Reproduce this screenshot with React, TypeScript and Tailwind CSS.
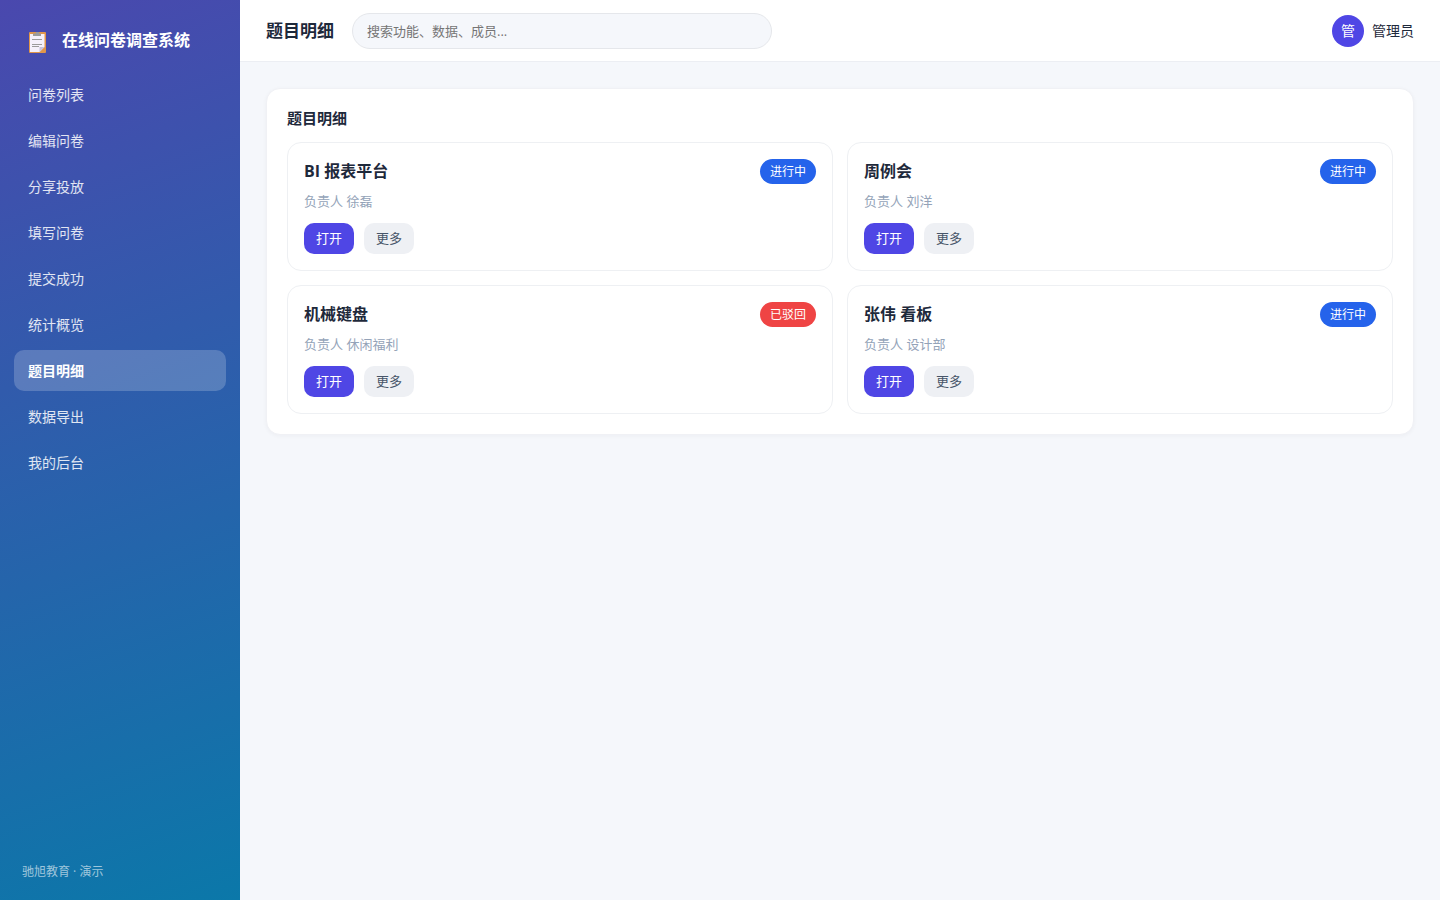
import React from 'react';
import clsx from 'clsx';

interface Item {
    title: string;
    owner: string;
    status: 'active' | 'rejected';
}

const navItems = [
    '问卷列表',
    '编辑问卷',
    '分享投放',
    '填写问卷',
    '提交成功',
    '统计概览',
    '题目明细',
    '数据导出',
    '我的后台',
];

const items: Item[] = [
    { title: 'BI 报表平台', owner: '徐磊', status: 'active' },
    { title: '周例会', owner: '刘洋', status: 'active' },
    { title: '机械键盘', owner: '休闲福利', status: 'rejected' },
    { title: '张伟 看板', owner: '设计部', status: 'active' },
];

const ClipboardLogo: React.FC = () => (
    <svg viewBox="0 0 17 21" className="w-[17px] h-[21px] shrink-0" aria-hidden="true">
        <rect x="0" y="0" width="17" height="21" rx="1" fill="#e0964a" />
        <path d="M1 2h14.5v13l-5 5H1z" fill="#f5f1fb" />
        <path d="M15.5 15 10.5 20v-5z" fill="#c9c4dc" />
        <path d="M4 4V1.5h2.5L7.2 0h2.6l.7 1.5H12V4z" fill="#9b9b9b" />
        <path d="M3 7.5h10M3 12.5h10M3 14.5h7" stroke="#9b9b9b" strokeWidth="1" />
    </svg>
);

const Sidebar: React.FC = () => (
    <aside className="w-60 shrink-0 flex flex-col px-3.5 py-5 text-white bg-[linear-gradient(160deg,#4a48ae_0%,#0b78a9_100%)]">
        <div className="flex items-center gap-4 pl-[15px] h-11 mb-2.5">
            <ClipboardLogo />
            <span className="pb-1 text-base font-bold">在线问卷调查系统</span>
        </div>

        <nav className="flex flex-col gap-[5px]">
            {navItems.map((label) => {
                const current = label === '题目明细';
                return (
                    <a
                        key={label}
                        href="#"
                        aria-current={current ? 'page' : undefined}
                        className={clsx(
                            'px-3.5 py-2.5 rounded-[10px] text-sm leading-[21px]',
                            current ? 'bg-white/20 font-bold text-white' : 'text-white/85'
                        )}
                    >
                        {label}
                    </a>
                );
            })}
        </nav>

        <div className="mt-auto px-2 text-xs leading-4 text-white/60">驰旭教育 · 演示</div>
    </aside>
);

const Header: React.FC = () => (
    <header className="flex items-center gap-[18px] px-[26px] py-3 h-[62px] bg-white border-b border-[#eceef3]">
        <h1 className="text-[17px] font-bold">题目明细</h1>
        <input
            type="search"
            aria-label="搜索"
            placeholder="搜索功能、数据、成员..."
            className="w-[420px] h-9 px-3.5 rounded-full border border-[#e5e7eb] bg-[#f5f7fb] text-[13px] placeholder:text-[#757575]"
        />
        <div className="ml-auto flex items-center gap-2 text-sm">
            <div className="w-8 h-8 rounded-full bg-[#4f46e5] text-white flex items-center justify-center text-sm">
                管
            </div>
            <span>管理员</span>
        </div>
    </header>
);

const ItemCard: React.FC<{ item: Item }> = ({ item }) => (
    <article className="p-4 rounded-[14px] border border-[#eef0f3] bg-white">
        <div className="flex items-center justify-between">
            <h3 className="text-base leading-[25px] font-bold">{item.title}</h3>
            <span
                className={clsx(
                    'px-2.5 py-1 rounded-full text-xs leading-[17px] text-white',
                    item.status === 'active' ? 'bg-[#2563eb]' : 'bg-[#ef4444]'
                )}
            >
                {item.status === 'active' ? '进行中' : '已驳回'}
            </span>
        </div>
        <p className="mt-2 text-[13px] leading-[19px] text-[#94a3b8]">负责人 {item.owner}</p>
        <div className="mt-3 flex gap-2.5">
            <button className="px-3 py-1.5 rounded-[10px] bg-[#4f46e5] text-white text-[13px] leading-[19px]">打开</button>
            <button className="px-3 py-1.5 rounded-[10px] bg-[#eef0f4] text-[#475569] text-[13px] leading-[19px]">更多</button>
        </div>
    </article>
);

export default function App() {
    return (
        <div className="min-h-screen flex bg-[#f5f7fb] text-[#1e293b] font-['Open_Sans','Noto_Sans_CJK_SC',sans-serif]">
            <Sidebar />
            <div className="flex-1 min-w-0">
                <Header />
                <main className="p-[26px]">
                    <section className="p-5 rounded-[14px] border border-[#f0f1f5] bg-white shadow-[0_1px_4px_rgba(15,23,42,0.04)]">
                        <h2 className="mb-3.5 text-[15px] leading-[19px] font-bold">题目明细</h2>
                        <div className="grid grid-cols-2 gap-3.5">
                            {items.map((item) => (
                                <ItemCard key={item.title} item={item} />
                            ))}
                        </div>
                    </section>
                </main>
            </div>
        </div>
    );
}
